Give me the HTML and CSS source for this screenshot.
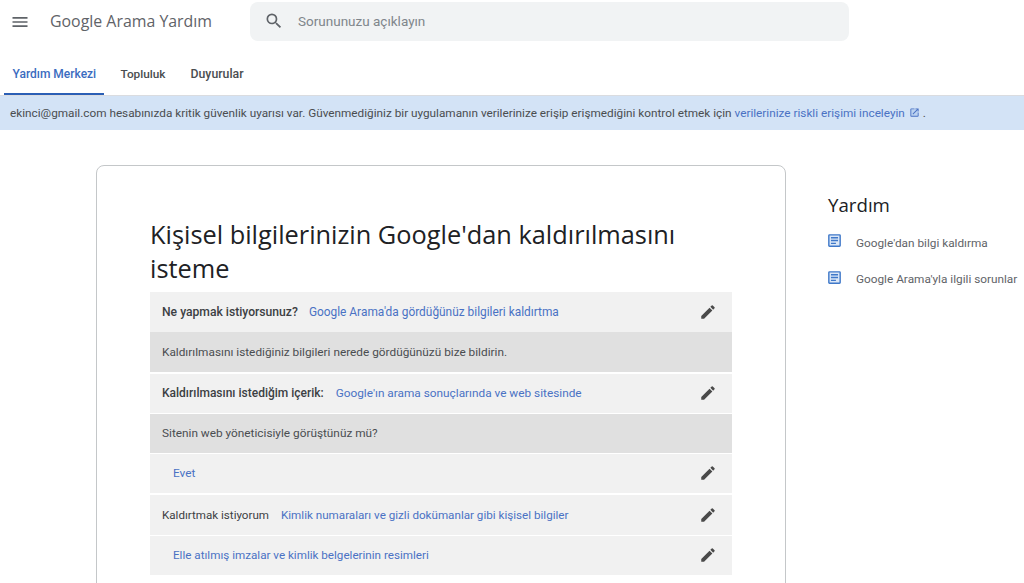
FILE: index.html
```html
<!DOCTYPE html>
<html lang="tr">
<head>
<meta charset="utf-8">
<title>Google Arama Yardım</title>
<link rel="stylesheet" href="styles.css">
</head>
<body>
<header class="topbar">
  <svg class="menu-icon" viewBox="0 0 24 24" width="20" height="20"><path d="M3 18h18v-2H3v2zm0-5h18v-2H3v2zm0-7v2h18V6H3z"/></svg>
  <span class="product">Google Arama Yardım</span>
  <div class="search">
    <svg class="search-icon" viewBox="0 0 24 24" width="20" height="20"><path d="M15.5 14h-.79l-.28-.27A6.47 6.47 0 0 0 16 9.5 6.5 6.5 0 1 0 9.5 16c1.61 0 3.09-.59 4.23-1.57l.27.28v.79l5 4.99L20.49 19l-4.99-5zm-6 0C7.01 14 5 11.99 5 9.5S7.01 5 9.5 5 14 7.01 14 9.5 11.99 14 9.5 14z"/></svg>
    <span class="search-text">Sorununuzu açıklayın</span>
  </div>
</header>
<nav class="tabs">
  <a class="tab tab-active">Yardım Merkezi</a>
  <a class="tab">Topluluk</a>
  <a class="tab">Duyurular</a>
</nav>
<div class="banner">ekinci@gmail.com hesabınızda kritik güvenlik uyarısı var. Güvenmediğiniz bir uygulamanın verilerinize erişip erişmediğini kontrol etmek için <a class="link">verilerinize riskli erişimi inceleyin <svg class="ext-icon" viewBox="0 0 24 24" width="11" height="11"><rect x="4" y="4" width="16" height="16" fill="#bcd3f0"/><path d="M19 19H5V5h7V3H5a2 2 0 0 0-2 2v14a2 2 0 0 0 2 2h14c1.1 0 2-.9 2-2v-7h-2v7zM14 3v2h3.59l-9.83 9.83 1.41 1.41L19 6.41V10h2V3h-7z"/></svg></a> .</div>
<main class="main">
  <section class="card">
    <h1 class="title">Kişisel bilgilerinizin Google'dan kaldırılmasını isteme</h1>
    <div class="rows">
      <div class="row row-tall row-answer"><b class="label label-wide">Ne yapmak istiyorsunuz?</b><a class="link link-wide">Google Arama'da gördüğünüz bilgileri kaldırtma</a><svg class="edit" viewBox="0 0 24 24" width="18" height="18"><path d="M3 17.25V21h3.75L17.81 9.94l-3.75-3.75L3 17.25zM20.71 7.04a1 1 0 0 0 0-1.41l-2.34-2.34a1 1 0 0 0-1.41 0l-1.83 1.83 3.75 3.75 1.83-1.83z"/></svg></div>
      <div class="row row-tall row-question gap2">Kaldırılmasını istediğiniz bilgileri nerede gördüğünüzü bize bildirin.</div>
      <div class="row row-answer gap1"><b class="label">Kaldırılmasını istediğim içerik:</b><a class="link">Google'ın arama sonuçlarında ve web sitesinde</a><svg class="edit" viewBox="0 0 24 24" width="18" height="18"><path d="M3 17.25V21h3.75L17.81 9.94l-3.75-3.75L3 17.25zM20.71 7.04a1 1 0 0 0 0-1.41l-2.34-2.34a1 1 0 0 0-1.41 0l-1.83 1.83 3.75 3.75 1.83-1.83z"/></svg></div>
      <div class="row row-question gap1">Sitenin web yöneticisiyle görüştünüz mü?</div>
      <div class="row row-answer row-indent gap2"><a class="link">Evet</a><svg class="edit" viewBox="0 0 24 24" width="18" height="18"><path d="M3 17.25V21h3.75L17.81 9.94l-3.75-3.75L3 17.25zM20.71 7.04a1 1 0 0 0 0-1.41l-2.34-2.34a1 1 0 0 0-1.41 0l-1.83 1.83 3.75 3.75 1.83-1.83z"/></svg></div>
      <div class="row row-tall row-answer row-narrow gap1"><span class="label">Kaldırtmak istiyorum</span><a class="link">Kimlik numaraları ve gizli dokümanlar gibi kişisel bilgiler</a><svg class="edit" viewBox="0 0 24 24" width="18" height="18"><path d="M3 17.25V21h3.75L17.81 9.94l-3.75-3.75L3 17.25zM20.71 7.04a1 1 0 0 0 0-1.41l-2.34-2.34a1 1 0 0 0-1.41 0l-1.83 1.83 3.75 3.75 1.83-1.83z"/></svg></div>
      <div class="row row-answer row-indent row-narrow"><a class="link">Elle atılmış imzalar ve kimlik belgelerinin resimleri</a><svg class="edit" viewBox="0 0 24 24" width="18" height="18"><path d="M3 17.25V21h3.75L17.81 9.94l-3.75-3.75L3 17.25zM20.71 7.04a1 1 0 0 0 0-1.41l-2.34-2.34a1 1 0 0 0-1.41 0l-1.83 1.83 3.75 3.75 1.83-1.83z"/></svg></div>
    </div>
  </section>
  <aside class="side">
    <h2 class="side-title">Yardım</h2>
    <div class="side-item"><svg class="doc" viewBox="0 0 24 24" width="17" height="17"><rect x="4" y="4" width="16" height="16" fill="#dbe7f7"/><path d="M19 3H5a2 2 0 0 0-2 2v14c0 1.1.9 2 2 2h14a2 2 0 0 0 2-2V5a2 2 0 0 0-2-2zm0 16H5V5h14v14zM7 7h10v2H7V7zm0 4h10v2H7v-2zm0 4h7v2H7v-2z"/></svg><span>Google'dan bilgi kaldırma</span></div>
    <div class="side-item"><svg class="doc" viewBox="0 0 24 24" width="17" height="17"><rect x="4" y="4" width="16" height="16" fill="#dbe7f7"/><path d="M19 3H5a2 2 0 0 0-2 2v14c0 1.1.9 2 2 2h14a2 2 0 0 0 2-2V5a2 2 0 0 0-2-2zm0 16H5V5h14v14zM7 7h10v2H7V7zm0 4h10v2H7v-2zm0 4h7v2H7v-2z"/></svg><span>Google Arama'yla ilgili sorunlar</span></div>
  </aside>
</main>
</body>
</html>
```
FILE: styles.css
```css
* { box-sizing: border-box; }
html, body { margin: 0; height: 583px; overflow: hidden; background: #fff; }
body { font-family: Roboto, "Liberation Sans", sans-serif; font-size: 12px; color: #3c4043; }
.topbar { display: flex; align-items: center; height: 42px; padding: 1px 0 0 10px; }
.menu-icon { fill: #5f6368; flex: none; }
.product { font-family: "Open Sans", sans-serif; font-size: 15.9px; color: #5f6368; margin-left: 20px; padding-bottom: 1px; width: 200px; white-space: nowrap; }
.search { display: flex; align-items: center; width: 599px; height: 39px; background: #f1f3f4; border-radius: 8px; padding: 0 0 1px 14px; }
.search-icon { fill: #5f6368; flex: none; }
.search-text { font-size: 13.5px; color: #80868b; margin-left: 14px; }
.tabs { display: flex; height: 54px; padding-left: 4px; border-bottom: 1px solid #dadce0; }
.tab { display: flex; align-items: center; height: 53px; padding: 21px 8.5px 8px; margin-right: 8px; font-size: 11.8px; font-weight: 500; color: #4a4d50; white-space: nowrap; border-bottom: 2px solid transparent; }
.tab:last-child { font-size: 12.3px; }
.tab-active { flex: none; width: 100px; font-size: 12px; color: #3b6cc0; border-bottom-color: #2b5fb5; }
.banner { height: 34px; line-height: 34px; padding-left: 10px; background: #d3e3f6; font-size: 11.77px; color: #4a4d50; white-space: nowrap; }
.link { color: #4a72c4; }
.ext-icon { fill: #4a72c4; vertical-align: -1px; margin-left: 1px; }
.main { display: flex; align-items: flex-start; padding: 35px 0 0 96px; }
.card { flex: none; width: 690px; height: 480px; padding: 52px 53px 0; border: 1px solid #c4c7c9; border-radius: 8px; }
.title { margin: 0 0 7px; font-family: "Open Sans", sans-serif; font-weight: 400; font-size: 25.35px; line-height: 33.5px; color: #202124; }
.rows { display: flex; flex-direction: column; width: 582px; }
.row { display: flex; align-items: center; height: 39px; padding: 0 15px 1px 12px; font-size: 11.82px; color: #4a4d50; }
.row-tall { height: 40px; padding-bottom: 0; }
.gap1 { margin-bottom: 1px; }
.gap2 { margin-bottom: 2px; }
.row-answer { background: #f1f1f1; }
.row-question { background: #e0e0e0; }
.row-indent { padding-left: 23px; }
.row-narrow { font-size: 11.65px; }
.label { margin-right: 12px; font-size: 12px; font-weight: 500; color: #3c4043; }
.label-wide { margin-right: 11px; font-size: 12.15px; }
.link-wide { font-size: 11.9px; }
span.label { font-size: 11.6px; font-weight: 400; }
.edit { fill: #4a4a4a; margin-left: auto; flex: none; }
.side { margin-left: 42px; padding-top: 28px; }
.side-title { margin: 0 0 15px; font-family: "Open Sans", sans-serif; font-weight: 500; font-size: 18.7px; line-height: 24px; color: #202124; }
.side-item { display: flex; align-items: flex-start; height: 36.5px; font-size: 11.8px; color: #5f6368; white-space: nowrap; }
.side-item span { margin-left: 13px; margin-top: 3.5px; }
.doc { fill: #3f78c9; margin-left: -2px; flex: none; }
```
